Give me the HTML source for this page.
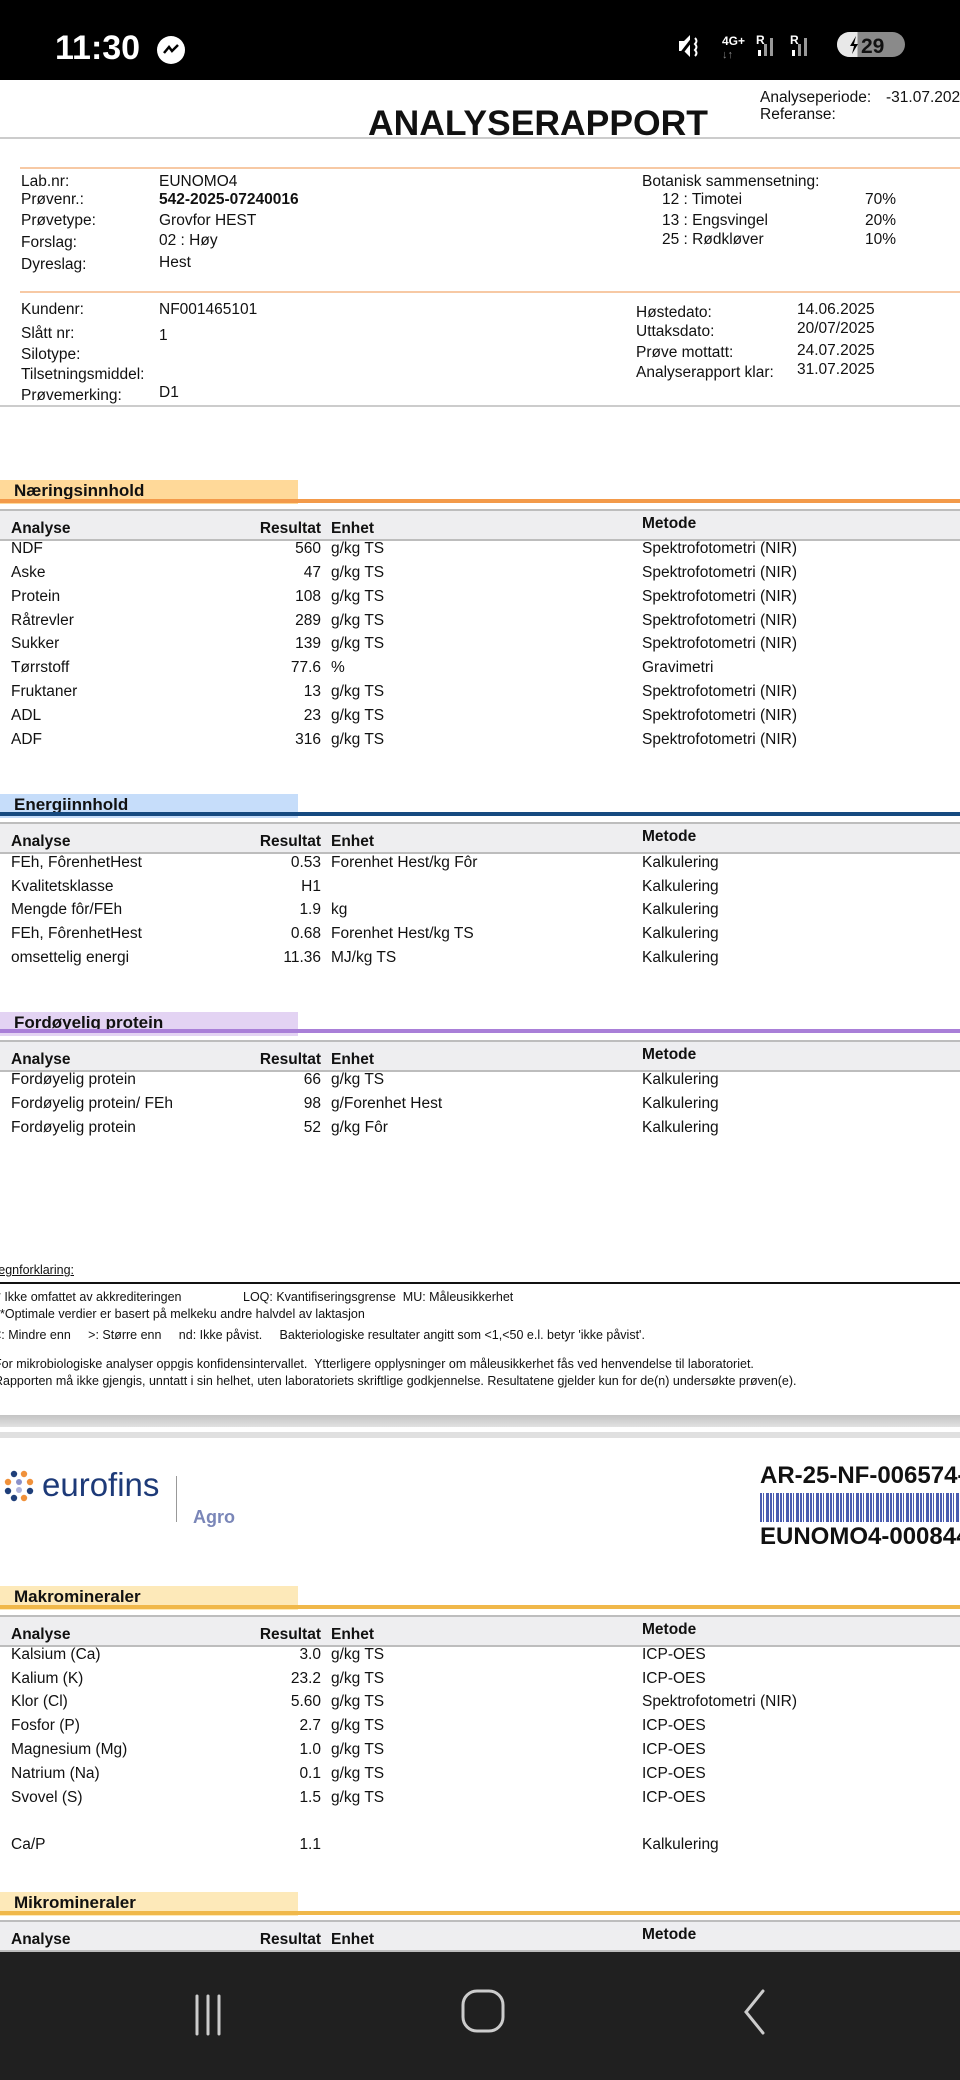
<!DOCTYPE html>
<html><head><meta charset="utf-8"><style>
*{margin:0;padding:0;box-sizing:border-box}
body{width:960px;height:2080px;position:relative;background:#fff;font-family:"Liberation Sans",Arial,sans-serif;color:#111;overflow:hidden}
.a{position:absolute;white-space:nowrap}
.t{font-size:15.5px;line-height:20px}
.band{position:absolute;left:0;width:298px;height:24px;font-weight:bold;font-size:17px;line-height:22px;padding-left:14px}
.line{position:absolute;left:0;width:960px;height:4px}
.hdr{position:absolute;left:0;width:960px;height:32px;background:#eeeef0;border-top:2px solid #bdbdbd;border-bottom:2px solid #bdbdbd;font-weight:bold;font-size:15.5px}
.hdr span{position:absolute;top:7px}
.row{position:absolute;left:0;width:960px;height:24px;font-size:15.5px;line-height:24px}
.row span{position:absolute;top:0}
.c1{left:11px}.c2{right:639px;text-align:right}.c3{left:331px}.c4{left:642px}
</style></head><body>
<div class="a" style="left:0;top:0;width:960px;height:80px;background:#000"></div>
<div class="a" style="left:55px;top:28px;color:#fff;font-size:34px;font-weight:bold;line-height:40px">11:30</div>
<div class="a" style="left:157px;top:36px;width:28px;height:28px;border-radius:50%;background:#fff"></div>
<svg class="a" style="left:157px;top:36px" width="28" height="28" viewBox="0 0 28 28"><path d="M7 17 L12 11 L15 15 L21 9" stroke="#000" stroke-width="2.5" fill="none"/></svg>
<svg class="a" style="left:676px;top:32px" width="230" height="28" viewBox="0 0 230 28">
<path d="M3 9h5l6-6v22l-6-6H3z" fill="#fff"/><path d="M18 5l-14 18" stroke="#000" stroke-width="3"/><path d="M19 6q3 3 0 6q3 3 0 6q3 3 0 6" stroke="#fff" stroke-width="2" fill="none"/>
<text x="46" y="13" fill="#fff" font-size="12" font-weight="bold" font-family="Liberation Sans">4G+</text>
<text x="46" y="26" fill="#888" font-size="11" font-family="Liberation Sans">↓↑</text>
<text x="80" y="12" fill="#fff" font-size="12" font-weight="bold" font-family="Liberation Sans">R</text>
<rect x="82" y="18" width="3" height="6" fill="#fff"/><rect x="88" y="12" width="3" height="12" fill="#999"/><rect x="94" y="6" width="3" height="18" fill="#999"/>
<text x="114" y="12" fill="#fff" font-size="12" font-weight="bold" font-family="Liberation Sans">R</text>
<rect x="116" y="18" width="3" height="6" fill="#fff"/><rect x="122" y="12" width="3" height="12" fill="#999"/><rect x="128" y="6" width="3" height="18" fill="#999"/>
<rect x="161" y="0" width="68" height="25" rx="12.5" fill="#8a8a8a"/><path d="M173.5 0h8v25h-8a12.5 12.5 0 0 1 0-25z" fill="#e8e8e8"/>
<path d="M180 4l-6 10h4l-2 8 6-10h-4z" fill="#000"/>
<text x="185" y="21" fill="#111" font-size="21" font-weight="bold" font-family="Liberation Sans">29</text>
</svg>
<div class="a" style="left:368px;top:102px;font-size:35.5px;font-weight:bold;line-height:42px">ANALYSERAPPORT</div>
<div class="a t" style="left:760px;top:88px">Analyseperiode:</div>
<div class="a t" style="left:886px;top:88px">-31.07.2025</div>
<div class="a t" style="left:760px;top:105px">Referanse:</div>
<div class="a" style="left:0;top:137px;width:960px;height:2px;background:#ccc"></div>
<div class="a" style="left:20px;top:167px;width:940px;height:2px;background:#f7c9a4"></div>
<div class="a t" style="left:21px;top:172px">Lab.nr:</div><div class="a t" style="left:159px;top:172px">EUNOMO4</div>
<div class="a t" style="left:21px;top:190px">Prøvenr.:</div><div class="a t" style="left:159px;top:190px;font-weight:bold">542-2025-07240016</div>
<div class="a t" style="left:21px;top:211px">Prøvetype:</div><div class="a t" style="left:159px;top:211px">Grovfor HEST</div>
<div class="a t" style="left:21px;top:233px">Forslag:</div><div class="a t" style="left:159px;top:231px">02 : Høy</div>
<div class="a t" style="left:21px;top:255px">Dyreslag:</div><div class="a t" style="left:159px;top:253px">Hest</div>
<div class="a t" style="left:642px;top:172px">Botanisk sammensetning:</div>
<div class="a t" style="left:662px;top:190px">12 : Timotei</div><div class="a t" style="left:865px;top:190px">70%</div>
<div class="a t" style="left:662px;top:211px">13 : Engsvingel</div><div class="a t" style="left:865px;top:211px">20%</div>
<div class="a t" style="left:662px;top:230px">25 : Rødkløver</div><div class="a t" style="left:865px;top:230px">10%</div>
<div class="a" style="left:20px;top:291px;width:940px;height:2px;background:#f7c9a4"></div>
<div class="a t" style="left:21px;top:300px">Kundenr:</div><div class="a t" style="left:159px;top:300px">NF001465101</div>
<div class="a t" style="left:21px;top:324px">Slått nr:</div><div class="a t" style="left:159px;top:326px">1</div>
<div class="a t" style="left:21px;top:345px">Silotype:</div>
<div class="a t" style="left:21px;top:365px">Tilsetningsmiddel:</div>
<div class="a t" style="left:21px;top:386px">Prøvemerking:</div><div class="a t" style="left:159px;top:383px">D1</div>
<div class="a t" style="left:636px;top:303px">Høstedato:</div><div class="a t" style="left:797px;top:300px">14.06.2025</div>
<div class="a t" style="left:636px;top:322px">Uttaksdato:</div><div class="a t" style="left:797px;top:319px">20/07/2025</div>
<div class="a t" style="left:636px;top:343px">Prøve mottatt:</div><div class="a t" style="left:797px;top:341px">24.07.2025</div>
<div class="a t" style="left:636px;top:363px">Analyserapport klar:</div><div class="a t" style="left:797px;top:360px">31.07.2025</div>
<div class="a" style="left:0;top:405px;width:960px;height:2px;background:#ccc"></div>

<div class="band" style="top:480px;background:#ffd999">Næringsinnhold</div>
<div class="line" style="top:499px;background:#f39a4a"></div>
<div class="hdr" style="top:509px"><span class="c1" style="top:9px">Analyse</span><span class="c2" style="top:9px">Resultat</span><span class="c3" style="top:9px">Enhet</span><span class="c4" style="top:4px">Metode</span></div>
<div class="row" style="top:537px"><span class="c1">NDF</span><span class="c2">560</span><span class="c3">g/kg TS</span><span class="c4">Spektrofotometri (NIR)</span></div>
<div class="row" style="top:561px"><span class="c1">Aske</span><span class="c2">47</span><span class="c3">g/kg TS</span><span class="c4">Spektrofotometri (NIR)</span></div>
<div class="row" style="top:585px"><span class="c1">Protein</span><span class="c2">108</span><span class="c3">g/kg TS</span><span class="c4">Spektrofotometri (NIR)</span></div>
<div class="row" style="top:609px"><span class="c1">Råtrevler</span><span class="c2">289</span><span class="c3">g/kg TS</span><span class="c4">Spektrofotometri (NIR)</span></div>
<div class="row" style="top:632px"><span class="c1">Sukker</span><span class="c2">139</span><span class="c3">g/kg TS</span><span class="c4">Spektrofotometri (NIR)</span></div>
<div class="row" style="top:656px"><span class="c1">Tørrstoff</span><span class="c2">77.6</span><span class="c3">%</span><span class="c4">Gravimetri</span></div>
<div class="row" style="top:680px"><span class="c1">Fruktaner</span><span class="c2">13</span><span class="c3">g/kg TS</span><span class="c4">Spektrofotometri (NIR)</span></div>
<div class="row" style="top:704px"><span class="c1">ADL</span><span class="c2">23</span><span class="c3">g/kg TS</span><span class="c4">Spektrofotometri (NIR)</span></div>
<div class="row" style="top:728px"><span class="c1">ADF</span><span class="c2">316</span><span class="c3">g/kg TS</span><span class="c4">Spektrofotometri (NIR)</span></div>

<div class="band" style="top:794px;background:#c6ddfa">Energiinnhold</div>
<div class="line" style="top:812px;background:#164a80"></div>
<div class="hdr" style="top:822px"><span class="c1" style="top:9px">Analyse</span><span class="c2" style="top:9px">Resultat</span><span class="c3" style="top:9px">Enhet</span><span class="c4" style="top:4px">Metode</span></div>
<div class="row" style="top:851px"><span class="c1">FEh, FôrenhetHest</span><span class="c2">0.53</span><span class="c3">Forenhet Hest/kg Fôr</span><span class="c4">Kalkulering</span></div>
<div class="row" style="top:875px"><span class="c1">Kvalitetsklasse</span><span class="c2">H1</span><span class="c4">Kalkulering</span></div>
<div class="row" style="top:898px"><span class="c1">Mengde fôr/FEh</span><span class="c2">1.9</span><span class="c3">kg</span><span class="c4">Kalkulering</span></div>
<div class="row" style="top:922px"><span class="c1">FEh, FôrenhetHest</span><span class="c2">0.68</span><span class="c3">Forenhet Hest/kg TS</span><span class="c4">Kalkulering</span></div>
<div class="row" style="top:946px"><span class="c1">omsettelig energi</span><span class="c2">11.36</span><span class="c3">MJ/kg TS</span><span class="c4">Kalkulering</span></div>

<div class="band" style="top:1012px;background:#e3d3f3">Fordøyelig protein</div>
<div class="line" style="top:1029px;background:#a97fd8"></div>
<div class="hdr" style="top:1040px"><span class="c1" style="top:9px">Analyse</span><span class="c2" style="top:9px">Resultat</span><span class="c3" style="top:9px">Enhet</span><span class="c4" style="top:4px">Metode</span></div>
<div class="row" style="top:1068px"><span class="c1">Fordøyelig protein</span><span class="c2">66</span><span class="c3">g/kg TS</span><span class="c4">Kalkulering</span></div>
<div class="row" style="top:1092px"><span class="c1">Fordøyelig protein/ FEh</span><span class="c2">98</span><span class="c3">g/Forenhet Hest</span><span class="c4">Kalkulering</span></div>
<div class="row" style="top:1116px"><span class="c1">Fordøyelig protein</span><span class="c2">52</span><span class="c3">g/kg Fôr</span><span class="c4">Kalkulering</span></div>

<div class="a" style="left:-8px;top:1263px;font-size:12.5px;text-decoration:underline">Tegnforklaring:</div>
<div class="a" style="left:0;top:1282px;width:960px;height:2px;background:#111"></div>
<div class="a" style="left:-4px;top:1290px;font-size:12.5px">* Ikke omfattet av akkrediteringen</div>
<div class="a" style="left:243px;top:1290px;font-size:12.5px">LOQ: Kvantifiseringsgrense&nbsp; MU: Måleusikkerhet</div>
<div class="a" style="left:0;top:1307px;font-size:12.5px">*Optimale verdier er basert på melkeku andre halvdel av laktasjon</div>
<div class="a" style="left:-6px;top:1328px;font-size:12.5px">&lt;: Mindre enn&nbsp;&nbsp;&nbsp;&nbsp; &gt;: Større enn&nbsp;&nbsp;&nbsp;&nbsp; nd: Ikke påvist.&nbsp;&nbsp;&nbsp;&nbsp; Bakteriologiske resultater angitt som &lt;1,&lt;50 e.l. betyr 'ikke påvist'.</div>
<div class="a" style="left:-6px;top:1357px;font-size:12.5px">For mikrobiologiske analyser oppgis konfidensintervallet.&nbsp; Ytterligere opplysninger om måleusikkerhet fås ved henvendelse til laboratoriet.</div>
<div class="a" style="left:-6px;top:1374px;font-size:12.5px">Rapporten må ikke gjengis, unntatt i sin helhet, uten laboratoriets skriftlige godkjennelse. Resultatene gjelder kun for de(n) undersøkte prøven(e).</div>
<div class="a" style="left:0;top:1415px;width:960px;height:12px;background:linear-gradient(#c4c4c4,#e2e2e2)"></div>
<div class="a" style="left:0;top:1432px;width:960px;height:6px;background:#e0e0e0"></div>

<svg class="a" style="left:4px;top:1470px" width="36" height="32" viewBox="0 0 36 32">
<circle cx="10" cy="4" r="3.2" fill="#1f3f7a"/><circle cx="20" cy="4" r="3.2" fill="#f0913a"/>
<circle cx="4" cy="12" r="3.2" fill="#f0913a"/><circle cx="15" cy="12" r="3" fill="#8a90c8"/><circle cx="26" cy="12" r="3.2" fill="#f0913a"/>
<circle cx="4" cy="21" r="3.2" fill="#1f3f7a"/><circle cx="15" cy="20" r="3" fill="#b0b4dc"/><circle cx="26" cy="21" r="3.2" fill="#1f3f7a"/>
<circle cx="10" cy="28" r="3.2" fill="#1f3f7a"/><circle cx="20" cy="28" r="3.2" fill="#f0913a"/>
</svg>
<div class="a" style="left:42px;top:1465px;font-size:33px;color:#1d3a78;line-height:40px">eurofins</div>
<div class="a" style="left:176px;top:1476px;width:1px;height:46px;background:#999"></div>
<div class="a" style="left:193px;top:1506px;font-size:18px;color:#7a86b8;font-weight:bold;line-height:22px">Agro</div>
<div class="a" style="left:760px;top:1462px;font-size:24px;font-weight:bold;line-height:28px">AR-25-NF-006574-01</div>
<div class="a" style="left:760px;top:1493px;width:200px;height:29px;background:repeating-linear-gradient(90deg,#4a5cb0 0 2px,#fff 2px 3px,#4a5cb0 3px 4px,#fff 4px 6px,#4a5cb0 6px 9px,#fff 9px 10px)"></div>
<div class="a" style="left:760px;top:1523px;font-size:24px;font-weight:bold;line-height:28px">EUNOMO4-00084400</div>

<div class="band" style="top:1586px;background:#fde9b9">Makromineraler</div>
<div class="line" style="top:1605px;background:#f0b84a"></div>
<div class="hdr" style="top:1615px"><span class="c1" style="top:9px">Analyse</span><span class="c2" style="top:9px">Resultat</span><span class="c3" style="top:9px">Enhet</span><span class="c4" style="top:4px">Metode</span></div>
<div class="row" style="top:1643px"><span class="c1">Kalsium (Ca)</span><span class="c2">3.0</span><span class="c3">g/kg TS</span><span class="c4">ICP-OES</span></div>
<div class="row" style="top:1667px"><span class="c1">Kalium (K)</span><span class="c2">23.2</span><span class="c3">g/kg TS</span><span class="c4">ICP-OES</span></div>
<div class="row" style="top:1690px"><span class="c1">Klor (Cl)</span><span class="c2">5.60</span><span class="c3">g/kg TS</span><span class="c4">Spektrofotometri (NIR)</span></div>
<div class="row" style="top:1714px"><span class="c1">Fosfor (P)</span><span class="c2">2.7</span><span class="c3">g/kg TS</span><span class="c4">ICP-OES</span></div>
<div class="row" style="top:1738px"><span class="c1">Magnesium (Mg)</span><span class="c2">1.0</span><span class="c3">g/kg TS</span><span class="c4">ICP-OES</span></div>
<div class="row" style="top:1762px"><span class="c1">Natrium (Na)</span><span class="c2">0.1</span><span class="c3">g/kg TS</span><span class="c4">ICP-OES</span></div>
<div class="row" style="top:1786px"><span class="c1">Svovel (S)</span><span class="c2">1.5</span><span class="c3">g/kg TS</span><span class="c4">ICP-OES</span></div>
<div class="row" style="top:1833px"><span class="c1">Ca/P</span><span class="c2">1.1</span><span class="c4">Kalkulering</span></div>

<div class="band" style="top:1892px;background:#fde9b9">Mikromineraler</div>
<div class="line" style="top:1911px;background:#f0b84a"></div>
<div class="hdr" style="top:1920px"><span class="c1" style="top:9px">Analyse</span><span class="c2" style="top:9px">Resultat</span><span class="c3" style="top:9px">Enhet</span><span class="c4" style="top:4px">Metode</span></div>

<div class="a" style="left:0;top:1952px;width:960px;height:128px;background:#202020"></div>
<svg class="a" style="left:190px;top:1990px" width="60" height="50" viewBox="0 0 60 50">
<path d="M7 6v38M18 6v38M29 6v38" stroke="#ccc" stroke-width="3" stroke-linecap="round"/></svg>
<svg class="a" style="left:460px;top:1988px" width="48" height="52" viewBox="0 0 48 52">
<rect x="3" y="3" width="40" height="40" rx="14" fill="none" stroke="#ccc" stroke-width="3"/></svg>
<svg class="a" style="left:735px;top:1988px" width="40" height="50" viewBox="0 0 40 50">
<path d="M28 3L11 24L28 45" fill="none" stroke="#ccc" stroke-width="3" stroke-linecap="round"/></svg>
</body></html>
